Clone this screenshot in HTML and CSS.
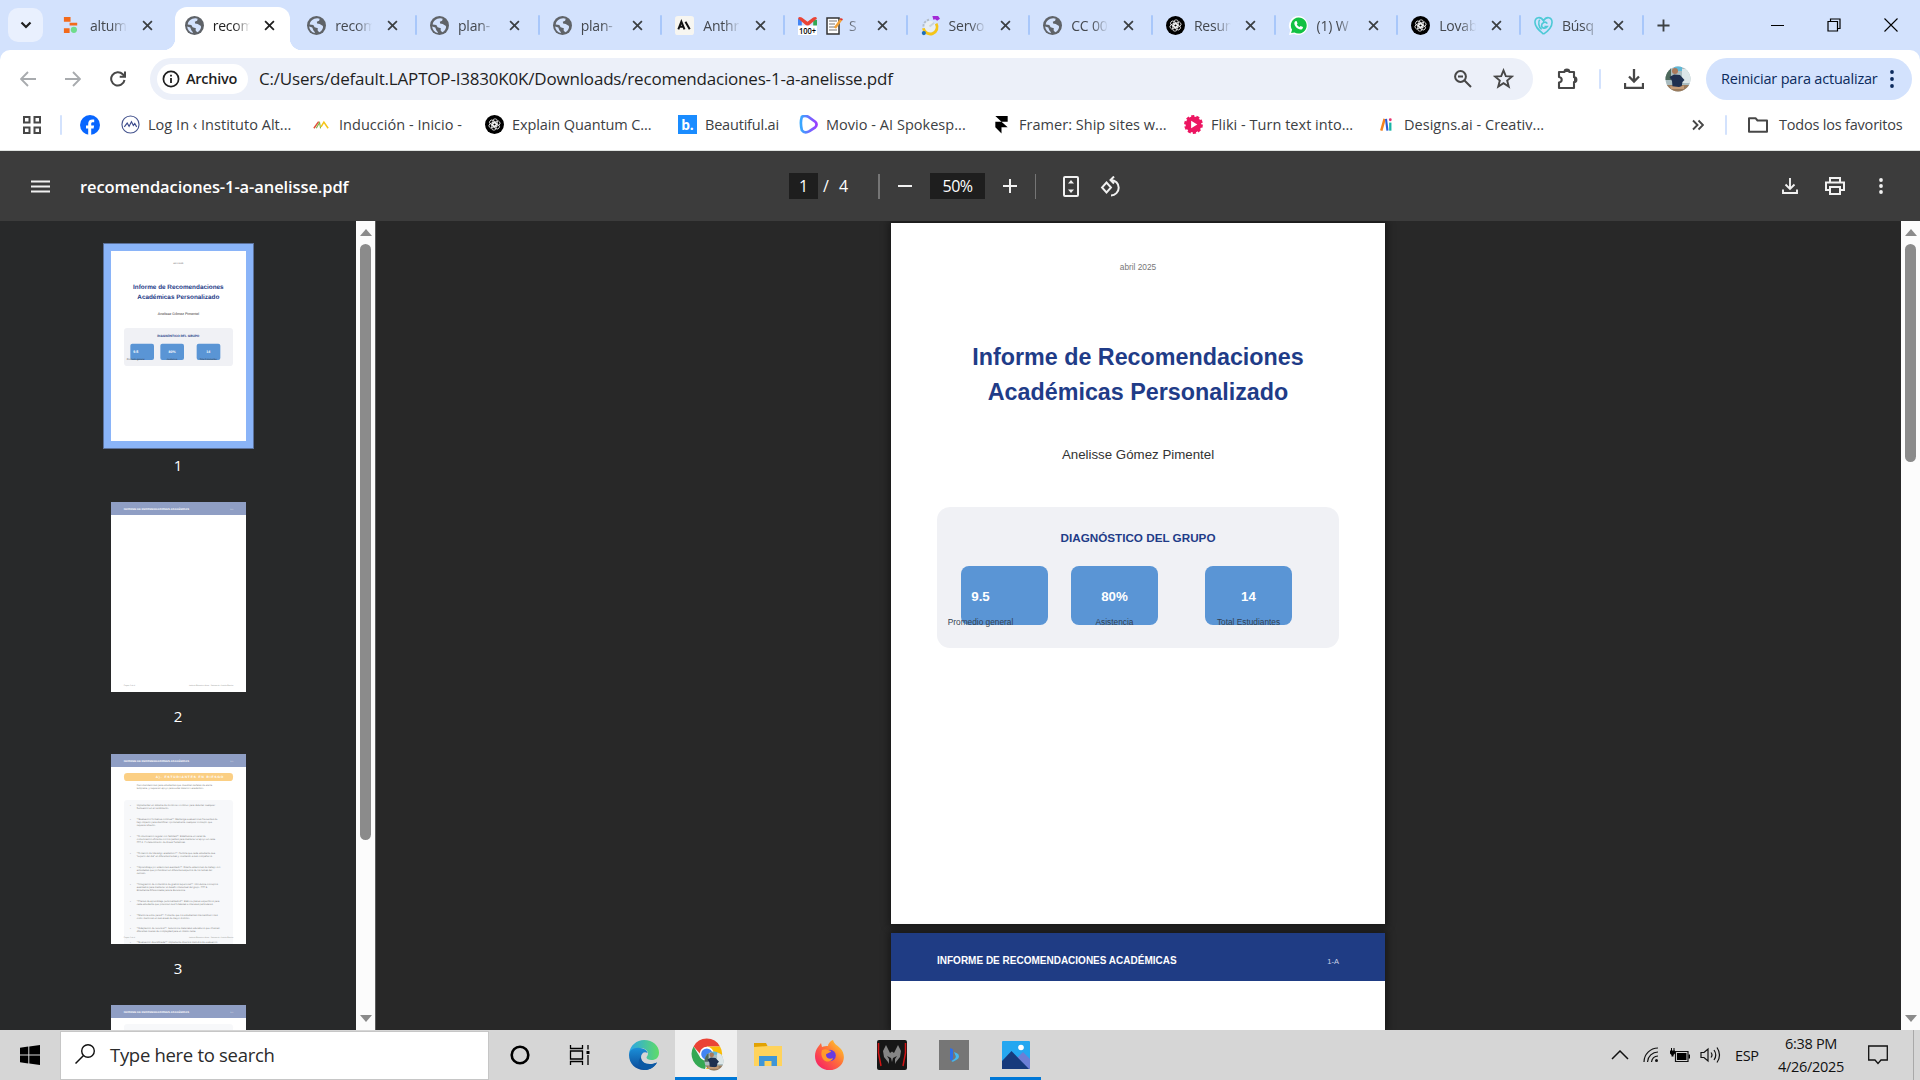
FILE: index.html
```html
<!DOCTYPE html>
<html lang="es">
<head>
<meta charset="utf-8">
<title>recomendaciones-1-a-anelisse.pdf</title>
<link rel="stylesheet" href="styles.css">
</head>
<body>
<svg class="defs" width="0" height="0">
  <symbol id="x" viewBox="0 0 12 12"><path d="M1.2 1.2 10.8 10.8M10.8 1.2 1.2 10.8" fill="none" stroke="currentColor" stroke-width="1.9"/></symbol>
  <symbol id="globe" viewBox="0 0 18 18"><circle cx="9" cy="9" r="9" fill="#5f6368"/><path d="M7 2.6C9 1.800 11 2 12 2.600L11.500 4.600 9.300 5.400 9.600 7.200 12 7.600 14.800 9.200C16 10.500 14.500 14 11.500 15.500L10 13.500 10.300 11.500 7.200 10.600 6 8.600 2.500 8C2.800 5.500 4.500 3.500 7 2.600Z" fill="#d3e2fd"/><path d="M2 10 5 11 6 13.500 7.500 15.500 7.200 16.200C4.500 15.500 2.300 13 2 10Z" fill="#d3e2fd"/></symbol>
  <symbol id="gpt" viewBox="0 0 20 20"><circle cx="10" cy="10" r="10" fill="#000"/><g fill="none" stroke="#fff" stroke-width=".8"><rect x="8.300" y="4" width="4.600" height="8" rx="2.300"/><rect x="8.300" y="4" width="4.600" height="8" rx="2.300" transform="rotate(60 10 10)"/><rect x="8.300" y="4" width="4.600" height="8" rx="2.300" transform="rotate(120 10 10)"/><rect x="8.300" y="4" width="4.600" height="8" rx="2.300" transform="rotate(180 10 10)"/><rect x="8.300" y="4" width="4.600" height="8" rx="2.300" transform="rotate(240 10 10)"/><rect x="8.300" y="4" width="4.600" height="8" rx="2.300" transform="rotate(300 10 10)"/></g></symbol>
  <symbol id="me" viewBox="0 0 26 26"><clipPath id="mc"><circle cx="13" cy="13" r="12.500"/></clipPath><g clip-path="url(#mc)"><path fill="#a9bcc0" d="M0 0h26v26H0z"/><path fill="#4e6a5c" d="M0 0h6v14H0z"/><path fill="#5fb8d8" d="M9 0h8v5H9z"/><path fill="#dce6e8" d="M17 3h9v14h-9z"/><path fill="#9a7b5c" d="M0 19h26v7H0z"/><path fill="#1f3050" d="M4.500 11 9 8.500l6 .5 4.500 5-2 2-1 5H7.500l-.5-6z"/><circle cx="10" cy="5" r="3" fill="#a97a5c"/><path fill="#c59c78" d="M5 20l9 1 5-1.500V23H6z"/></g></symbol>
</svg>

<header class="tabstrip">
  <div class="tabsearch"><svg width="12" height="8" viewBox="0 0 12 8"><path d="M1.500 1.500 6 6 10.500 1.500" fill="none" stroke="#1f1f1f" stroke-width="2.200"/></svg></div>
  <div class="tabs">
    <div class="tab"><svg class="fav" viewBox="0 0 20 20"><path fill="#f26a1b" d="M2 1h7v5H2zM8 7h8v3H8zM2 13h6v5H2z"/><circle cx="12.500" cy="14.500" r="3.300" fill="#6fdc8c"/></svg><span class="tt">altum</span><svg class="tx"><use href="#x"/></svg></div>
    <div class="tab active"><svg class="fav"><use href="#globe"/></svg><span class="tt">recom</span><svg class="tx"><use href="#x"/></svg></div>
    <div class="tab sep"><svg class="fav"><use href="#globe"/></svg><span class="tt">recom</span><svg class="tx"><use href="#x"/></svg></div>
    <div class="tab sep"><svg class="fav"><use href="#globe"/></svg><span class="tt">plan-</span><svg class="tx"><use href="#x"/></svg></div>
    <div class="tab sep"><svg class="fav"><use href="#globe"/></svg><span class="tt">plan-</span><svg class="tx"><use href="#x"/></svg></div>
    <div class="tab sep"><svg class="fav" viewBox="0 0 20 20"><rect width="20" height="20" rx="3" fill="#f7f6f1"/><path d="M3.500 14 6.700 6 10 14M4.700 11.300h4M11 6l4.500 8" fill="none" stroke="#111" stroke-width="2.100"/></svg><span class="tt">Anthr</span><svg class="tx"><use href="#x"/></svg></div>
    <div class="tab sep"><svg class="fav" viewBox="0 0 20 20"><path fill="#4285f4" d="M0 3h4v8H0z"/><path fill="#34a853" d="M16 4h4v7h-4z"/><path fill="#ea4335" d="M0 2.500Q1 0 4 1.500l6 4.500 6-4.500q3-1.500 4 1L10 11z"/><path fill="#fff" d="M0 10h20v10H0z"/><text x="1" y="18.500" font-size="9.500" font-weight="600" textLength="18" lengthAdjust="spacingAndGlyphs">100+</text></svg><span class="tt"><svg class="memo" viewBox="0 0 17 19"><path fill="#fff" stroke="#333" stroke-width="1.500" d="M1 2h12v16H1z"/><path stroke="#777" d="M3 5h8M3 8h6M3 11h6M3 14h8"/><path stroke="#f2a33a" stroke-width="2.600" d="M15.500 3 9 12"/><path stroke="#d33" stroke-width="2.600" d="M15.800 2.500 15 4"/></svg>S</span><svg class="tx"><use href="#x"/></svg></div>
    <div class="tab sep"><svg class="fav" viewBox="0 0 20 20"><circle cx="9.500" cy="11" r="6" fill="#e8eef4"/><path d="M16 8a7.300 7.300 0 1 1-13.500 5" fill="none" stroke="#f5c518" stroke-width="3"/><path d="M2.500 11a7 7 0 0 1 6-7" fill="none" stroke="#b4bec9" stroke-width="2" stroke-dasharray="2.500 1.200"/><circle cx="3" cy="18" r="2.200" fill="#1d6fb8"/><path d="M9 11 14 7" stroke="#c9d3dd" stroke-width="2"/><path fill="#a22bd6" d="M12 0h6l2 3-3 2-2-1.500-2 .5z"/></svg><span class="tt">Servo</span><svg class="tx"><use href="#x"/></svg></div>
    <div class="tab sep"><svg class="fav"><use href="#globe"/></svg><span class="tt">CC 00</span><svg class="tx"><use href="#x"/></svg></div>
    <div class="tab sep"><svg class="fav"><use href="#gpt"/></svg><span class="tt">Resun</span><svg class="tx"><use href="#x"/></svg></div>
    <div class="tab sep"><svg class="fav" viewBox="0 0 20 20"><path fill="#fff" d="M10 0a10 10 0 1 1-4.500 19L0 20l1.300-5A10 10 0 0 1 10 0z"/><path fill="#12c143" d="M10 1.500a8.500 8.500 0 1 1-4.200 15.800L2.200 18l1-3.500A8.500 8.500 0 0 1 10 1.500z"/><path fill="#fff" d="M6.500 5.500 8 5.200l1 2.600-.8 1.200c.7 1.300 1.600 2 2.900 2.600l1.100-1.100 2.500 1.100c.1 1.800-1.200 2.700-2.600 2.700C9 14 5.800 10.800 5.600 8c0-1 .3-1.900.9-2.500z"/></svg><span class="tt">(1) W</span><svg class="tx"><use href="#x"/></svg></div>
    <div class="tab sep"><svg class="fav"><use href="#gpt"/></svg><span class="tt">Lovab</span><svg class="tx"><use href="#x"/></svg></div>
    <div class="tab sep"><svg class="fav" viewBox="0 0 20 20"><path d="M10 19C4 14 1 11 1 6.500 1 1 7 0 10 5c3-5 9-4 9 1.500C19 11 16 15 10 19M14 8c-2-3-6-1-6 2s4 4 6 1h-3M6 4c-2 2-1 8 2 10" fill="none" stroke="#4dc9d6" stroke-width="1.700"/></svg><span class="tt">Búsq</span><svg class="tx"><use href="#x"/></svg></div>
  </div>
  <svg class="newtab" viewBox="0 0 14 14"><path d="M7 .5v13M.5 7h13" stroke="#3c4043" stroke-width="2"/></svg>
  <div class="winctl">
    <svg width="13" height="14"><path d="M0 7.500h13" stroke="#000"/></svg>
    <svg width="14" height="14" fill="none" stroke="#000" stroke-width="1.200"><path d="M1 3.500h9.500V13H1zM3.500 3V1H13v9.500h-2.500"/></svg>
    <svg width="14" height="14"><path d="M.5.5l13 13M13.500.5l-13 13" stroke="#000" stroke-width="1.100"/></svg>
  </div>
</header>

<nav class="toolbar">
  <svg class="nav n1" viewBox="0 0 16 16"><path d="M16 8H1.500M8 1 1 8l7 7" fill="none" stroke="#a8abae" stroke-width="1.900"/></svg>
  <svg class="nav n2" viewBox="0 0 16 16"><path d="M0 8h14.500M8 1l7 7-7 7" fill="none" stroke="#a8abae" stroke-width="1.900"/></svg>
  <svg class="nav n3" viewBox="0 0 16 16"><path d="M14.500 9A6.700 6.700 0 1 1 12.800 3.300L15 5.500M15 .5v5.300H9.700" fill="none" stroke="#474747" stroke-width="2"/></svg>
  <div class="omnibox">
    <div class="chip"><svg width="18" height="18" viewBox="0 0 18 18"><circle cx="9" cy="9" r="7.600" fill="none" stroke="#1f1f1f" stroke-width="1.700"/><path d="M9 8v5M9 4.800v1.800" stroke="#1f1f1f" stroke-width="1.800"/></svg><span class="arch">Archivo</span></div>
    <span class="url">C:/Users/default.LAPTOP-I3830K0K/Downloads/recomendaciones-1-a-anelisse.pdf</span>
    <svg class="zoomi" viewBox="0 0 18 18"><g fill="none" stroke="#474747" stroke-width="2"><circle cx="6.500" cy="6.500" r="5.400"/><path d="M10.500 10.500 17 17M4 6.500h5"/></g></svg>
    <svg class="star" viewBox="0 0 20 20"><path d="M10 2.300 12.200 7.800 18 8.200 13.500 12 15 17.700 10 14.500 5 17.700 6.500 12 2 8.200 7.800 7.800Z" fill="none" stroke="#474747" stroke-width="1.800"/></svg>
  </div>
  <svg class="puzzle" viewBox="0 0 21 22"><path d="M2 4h5.500a2.400 2.400 0 0 1 4.800 0H17v5.300a2.400 2.400 0 0 1 0 4.800V20H2v-5.500c3.600-.5 3.600-5 0-5.500z" fill="none" stroke="#474747" stroke-width="2.100" stroke-linejoin="round"/><path fill="#474747" d="M7.500 4a2.400 2.400 0 0 1 4.800 0zM17 9.300a2.400 2.400 0 0 1 0 4.800z"/></svg>
  <i class="vbar"></i>
  <svg class="dl" viewBox="0 0 20 20"><path d="M10 0v12M5 7.500l5 5 5-5M1 14v5h18v-5" fill="none" stroke="#474747" stroke-width="2.300"/></svg>
  <svg class="avatar"><use href="#me"/></svg>
  <div class="update"><span>Reiniciar para actualizar</span><svg width="4" height="18" fill="#0b2a5c"><circle cx="2" cy="2" r="1.900"/><circle cx="2" cy="9" r="1.900"/><circle cx="2" cy="16" r="1.900"/></svg></div>
</nav>

<nav class="bookmarks">
  <svg class="apps" viewBox="0 0 18 18"><path d="M1 1h5.500v5.500H1zM11.500 1H17v5.500h-5.500zM1 11.500h5.500V17H1zM11.500 11.500H17V17h-5.500z" fill="none" stroke="#474747" stroke-width="2"/></svg>
  <i class="vbar"></i>
  <svg class="fb" viewBox="0 0 20 20"><circle cx="10" cy="10" r="10" fill="#0866ff"/><path fill="#fff" d="M8.200 20v-6.500H6v-3h2.200V9c0-3.200 1.500-4.600 4.400-4.600.6 0 1.200.1 1.600.2v2.700h-1.400c-1.300 0-1.600.6-1.600 1.700v1.500h2.900l-.5 3h-2.400V20z"/></svg>
  <div class="bm b1"><svg viewBox="0 0 20 20"><circle cx="10" cy="10" r="9" fill="#fff" stroke="#46558f" stroke-width="1.200"/><path d="M3.500 12.500 6.500 8.500 8.500 12 11 7 13 11l1.500-2L16.500 12.500" fill="none" stroke="#3b4a8c" stroke-width="1.200"/></svg><span>Log In ‹ Instituto Alt...</span></div>
  <div class="bm b2"><svg viewBox="0 0 20 20"><path d="M2 14 7 7" stroke="#e0503a" stroke-width="1.600"/><path d="M4.500 14 8 8 9 14" fill="none" stroke="#7cb342" stroke-width="1.100"/><path d="M9.500 12.500l3-5 4.500 6.500" fill="none" stroke="#f5c518" stroke-width="1.600"/></svg><span>Inducción - Inicio -</span></div>
  <div class="bm b3"><svg><use href="#gpt"/></svg><span>Explain Quantum C...</span></div>
  <div class="bm b4"><svg viewBox="0 0 20 20"><path fill="#1a8cff" d="M0 0h20v20H0z"/><text x="3.500" y="15.500" fill="#fff" font-size="14.500" font-weight="700">b.</text></svg><span>Beautiful.ai</span></div>
  <div class="bm b5"><svg viewBox="0 0 20 20"><defs><linearGradient id="mv"><stop stop-color="#37a8ff"/><stop offset="1" stop-color="#9a3cff"/></linearGradient></defs><path d="M3 2Q6 0 10 2l7 5q3 3 0 6l-6 4q-5 3-8-1Q1 8 3 2Z" fill="none" stroke="url(#mv)" stroke-width="2.800"/></svg><span>Movio - AI Spokesp...</span></div>
  <div class="bm b6"><svg viewBox="0 0 20 20"><path d="M3.500 1h13v6H10l6.500 6H10v6.500L3.500 13V7H10z" fill="#000"/></svg><span>Framer: Ship sites w...</span></div>
  <div class="bm b7"><svg viewBox="0 0 20 20"><circle cx="10" cy="10" r="8.400" fill="#ec1561" stroke="#ec1561" stroke-width="3" stroke-dasharray="3.200 2.080"/><path fill="#fff" d="M7.500 6 14 10l-6.500 4z"/></svg><span>Fliki - Turn text into...</span></div>
  <div class="bm b8"><svg viewBox="0 0 20 20"><path d="M4.500 16.500 8 4" stroke="#f58220" stroke-width="2.600"/><path d="M9.500 4l1.500 12.500" stroke="#2a5bd7" stroke-width="2.200"/><path d="M14 8v8.500" stroke="#17b5a6" stroke-width="2.400"/><circle cx="14" cy="5" r="1.500" fill="#e8336d"/></svg><span>Designs.ai - Creativ...</span></div>
  <svg class="more" viewBox="0 0 12 12"><path d="M1 1.500 5.500 6 1 10.500M6.500 1.500 11 6l-4.500 4.500" fill="none" stroke="#474747" stroke-width="1.900"/></svg>
  <i class="vbar"></i>
  <svg class="folder" viewBox="0 0 20 16"><path d="M1 14.800V1.200h6.500l2 2.300H19v11.300z" fill="none" stroke="#474747" stroke-width="2" stroke-linejoin="round"/></svg>
  <span class="all">Todos los favoritos</span>
</nav>

<section class="pdfbar">
  <svg class="menu" viewBox="0 0 19 13"><path d="M0 1.500h19M0 6.500h19M0 11.500h19" stroke="#f1f1f1" stroke-width="2"/></svg>
  <h1>recomendaciones-1-a-anelisse.pdf</h1>
  <div class="pages"><b>1</b><span>/</span><span>4</span></div>
  <i class="pbar"></i>
  <svg class="pm" viewBox="0 0 14 14"><path d="M0 7h14" stroke="#f1f1f1" stroke-width="2"/></svg>
  <b class="pct">50%</b>
  <svg class="pm" viewBox="0 0 14 14"><path d="M0 7h14M7 0v14" stroke="#f1f1f1" stroke-width="2"/></svg>
  <i class="pbar p2"></i>
  <svg class="fitp" viewBox="0 0 16 21"><rect x="1" y="1" width="14" height="19" rx="1" fill="none" stroke="#f1f1f1" stroke-width="2"/><path fill="#f1f1f1" d="M8 4l3 3.500H5zM8 17l3-3.500H5z"/></svg>
  <svg class="rot" viewBox="0 0 22 21"><path d="M6.500 6.500 11 11.500 6.500 16.500 2 11.500Z" fill="none" stroke="#f1f1f1" stroke-width="1.900"/><path d="M11 4a7.700 7.700 0 1 1 0 15.400M14 .5 10.500 4 14 7.500" fill="none" stroke="#f1f1f1" stroke-width="2"/></svg>
  <div class="right">
    <svg width="16" height="16" viewBox="0 0 16 16"><path d="M8 0v10.500M3.500 6.500 8 11l4.500-4.500M1 11.500V15h14v-3.500" fill="none" stroke="#f1f1f1" stroke-width="1.900"/></svg>
    <svg width="20" height="18" viewBox="0 0 20 18"><path d="M5 5V1h10v4M4.500 13H1V5.500h18V13h-3.500M5 10h10v7H5z" fill="none" stroke="#f1f1f1" stroke-width="2"/></svg>
    <svg width="4" height="16" fill="#f1f1f1"><circle cx="2" cy="2" r="1.900"/><circle cx="2" cy="8" r="1.900"/><circle cx="2" cy="14" r="1.900"/></svg>
  </div>
</section>

<main class="viewer">
  <aside class="side">
    <div class="thumb sel"><svg viewBox="0 0 405 570">
      <path fill="#fff" d="M0 0h405v570H0z"/>
      <text x="202" y="38.500" font-size="6.800" text-anchor="middle" fill="#666">abril 2025</text>
      <g font-weight="700" fill="#1f3c88" text-anchor="middle"><text x="202" y="114" font-size="19.100">Informe de Recomendaciones</text><text x="202" y="144" font-size="19.100">Académicas Personalizado</text></g>
      <text x="202" y="192" font-size="10.800" text-anchor="middle" fill="#333">Anelisse Gómez Pimentel</text>
      <rect x="39" y="231" width="327" height="114" rx="10" fill="#f0f1f5"/>
      <text x="202" y="257" font-size="9.500" font-weight="700" text-anchor="middle" fill="#1f3c88">DIAGNÓSTICO DEL GRUPO</text>
      <g fill="#5a95d5"><rect x="58" y="278" width="71" height="49" rx="6"/><rect x="148" y="278" width="71" height="49" rx="6"/><rect x="257" y="278" width="71" height="49" rx="6"/></g>
      <g fill="#fff" font-weight="700" font-size="10.800" text-anchor="middle"><text x="74" y="306">9.5</text><text x="183" y="306">80%</text><text x="292" y="306">14</text></g>
      <g fill="#333" font-size="6.800" text-anchor="middle"><text x="74" y="327">Promedio general</text><text x="183" y="327">Asistencia</text><text x="292" y="327">Total Estudiantes</text></g>
    </svg></div>
    <span class="num first">1</span>
    <div class="thumb"><svg viewBox="0 0 405 570">
      <path fill="#8f9ec4" d="M0 0h405v39H0z"/><text x="38" y="24" font-size="8.200" font-weight="700" fill="#fff">INFORME DE RECOMENDACIONES ACADÉMICAS</text><text x="367" y="24" font-size="6" text-anchor="end" fill="#e6e9f3">1-A</text>
      <g font-size="5.500" fill="#999"><text x="38" y="552">Página 2 de 4</text><text x="367" y="552" text-anchor="end">Instituto Educativo Altum - Sistema de Gestión Escolar</text></g>
    </svg></div>
    <span class="num">2</span>
    <div class="thumb"><svg viewBox="0 0 405 570">
      <path fill="#8f9ec4" d="M0 0h405v39H0z"/><text x="38" y="24" font-size="8.200" font-weight="700" fill="#fff">INFORME DE RECOMENDACIONES ACADÉMICAS</text><text x="367" y="24" font-size="6" text-anchor="end" fill="#e6e9f3">1-A</text>
      <rect x="39" y="57" width="327" height="24" rx="10" fill="#fbcf84"/><text x="134" y="72.500" font-size="9.500" font-weight="700" fill="#fff" textLength="203">A). ESTUDIANTES EN RIESGO</text>
      <path fill="#f7f8fa" d="M39 570V148q0-10 10-10h307q10 0 10 10v422z"/>
      <g font-size="7.200" fill="#7c7c7c">
        <text x="77" y="95" textLength="226">Recomendaciones para estudiantes que muestran señales de alerta</text><text x="77" y="104" textLength="202">temprana, y requieren apoyo para evitar deterioro académico.</text>
        <text x="57" y="156">•</text><text x="77" y="156" textLength="235">Implementar un sistema de monitoreo continuo para detectar cualquier</text><text x="77" y="165" textLength="97">fluctuación en el rendimiento.</text>
        <text x="57" y="198">•</text><text x="77" y="198" textLength="242">**Evaluación formativa continua**: Mantenga evaluaciones frecuentes de</text><text x="77" y="207" textLength="226">bajo impacto para identificar oportunamente cualquier concepto que</text><text x="77" y="216" textLength="57">requiera refuerzo.</text>
        <text x="57" y="249">•</text><text x="77" y="249" textLength="207">**Comunicación regular con familias**: Establezca un canal de</text><text x="77" y="258" textLength="235">comunicación eficiente con los padres para mantener el apoyo en casa</text><text x="77" y="267" textLength="145">### 4. Fortalecimiento de Áreas Temáticas</text>
        <text x="57" y="300">•</text><text x="77" y="300" textLength="235">**Rotación de liderazgo académico**: Permita que cada estudiante sea</text><text x="77" y="309" textLength="228">"experto del día" en diferentes temas y orientando a sus compañeros.</text>
        <text x="57" y="342">•</text><text x="77" y="342" textLength="251">**Aprendizaje por estaciones avanzado**: Diseñe estaciones de trabajo con</text><text x="77" y="351" textLength="226">actividades que profundicen en diferentes aspectos de los temas del</text><text x="77" y="360" textLength="28">currículo.</text>
        <text x="57" y="393">•</text><text x="77" y="393" textLength="244">**Integración de contenidos de grados superiores**: Introduzca conceptos</text><text x="77" y="402" textLength="213">avanzados para mantener el desafío intelectual del grupo. ### 5.</text><text x="77" y="411" textLength="145">Enseñanza Diferenciada para la Excelencia</text>
        <text x="57" y="444">•</text><text x="77" y="444" textLength="248">**Planes de aprendizaje personalizados**: Elabore planes específicos para</text><text x="77" y="453" textLength="230">cada estudiante que potencien sus fortalezas e intereses particulares.</text>
        <text x="57" y="486">•</text><text x="77" y="486" textLength="243">**Mentoría entre pares**: Fomente que los estudiantes intercambien roles</text><text x="77" y="495" textLength="160">como mentores en sus áreas de mayor dominio.</text>
        <text x="57" y="525">•</text><text x="77" y="525" textLength="249">**Adaptación de recursos**: Seleccione materiales educativos que ofrezcan</text><text x="77" y="534" textLength="178">diferentes niveles de complejidad para un mismo tema.</text>
        <text x="57" y="567">•</text><text x="77" y="567" textLength="242">**Evaluación diversificada**: Implemente diversos métodos de evaluación</text>
      </g>
      <g font-size="5.500" fill="#999"><text x="38" y="552">Página 3 de 4</text><text x="367" y="552" text-anchor="end">Instituto Educativo Altum - Sistema de Gestión Escolar</text></g>
    </svg></div>
    <span class="num third">3</span>
    <div class="thumb last"><svg viewBox="0 0 405 75">
      <path fill="#8f9ec4" d="M0 0h405v39H0z"/><text x="38" y="24" font-size="8.200" font-weight="700" fill="#fff">INFORME DE RECOMENDACIONES ACADÉMICAS</text><text x="367" y="24" font-size="6" text-anchor="end" fill="#e6e9f3">1-A</text>
      <path fill="#f7f8fa" d="M39 75V67q0-10 10-10h307q10 0 10 10v8z"/>
    </svg></div>
  </aside>
  <div class="scroll"><i class="up"></i><i class="grip g1"></i><i class="down"></i></div>
  <div class="doc">
    <article class="page">
      <p class="date">abril 2025</p>
      <h2>Informe de Recomendaciones<br>Académicas Personalizado</h2>
      <p class="who">Anelisse Gómez Pimentel</p>
      <section class="card">
        <h3>DIAGNÓSTICO DEL GRUPO</h3>
        <div class="stats">
          <div class="stat s1"><b>9.5</b><span>Promedio general</span></div>
          <div class="stat s2"><b>80%</b><span>Asistencia</span></div>
          <div class="stat s3"><b>14</b><span>Total Estudiantes</span></div>
        </div>
      </section>
    </article>
    <article class="page next">
      <header><b>INFORME DE RECOMENDACIONES ACADÉMICAS</b><span>1-A</span></header>
    </article>
  </div>
  <div class="scroll plain"><i class="up"></i><i class="grip g2"></i><i class="down"></i></div>
</main>

<footer class="taskbar">
  <svg class="start" viewBox="0 0 20 20"><path d="M0 2.800 8.300 1.600v7.900H0zM9.300 1.400 20 0v9.500H9.300zM0 10.500h8.300v7.900L0 17.200zM9.300 10.500H20V20L9.300 18.600z"/></svg>
  <div class="search"><svg viewBox="0 0 20 20"><circle cx="13" cy="7" r="6.300" fill="none" stroke="#111" stroke-width="1.400"/><path d="M8.500 11.500.5 19.500" stroke="#111" stroke-width="1.500"/></svg><span>Type here to search</span></div>
  <div class="cell"><svg width="20" height="20"><circle cx="10" cy="10" r="8.300" fill="none" stroke="#000" stroke-width="2.600"/></svg></div>
  <div class="cell view"><svg width="21" height="20" fill="none" stroke="#000" stroke-width="1.300"><path d="M1.500 0v3.500h12V0M1.500 6h12v8h-12zM1.500 20v-3.500h12V20M19 0v4.500M19 10v10"/><path d="M17.500 6h3v3h-3z" fill="#000" stroke="none"/></svg></div>
  <div class="cell"><svg width="30" height="30" viewBox="0 0 30 30"><defs><linearGradient id="e1"><stop stop-color="#2aa4e8"/><stop offset="1" stop-color="#5fdc68"/></linearGradient><linearGradient id="e2" x2="0" y2="1"><stop stop-color="#1b8fd8"/><stop offset="1" stop-color="#0b4a98"/></linearGradient></defs><path fill="url(#e1)" d="M0 14C1 5 8 0 15 0c9 0 15 6 15 12.500 0 5-3 7.500-7.500 7.500-3 0-5-1-5-2.500 0-1 1.500-1.500 1.500-4C19 10 15 8 11 8 5 8 1 11 0 14z"/><path fill="url(#e2)" d="M0 15c0-5 5-8 11-7 5 .5 7.500 3 7.500 5-3-2-6.500 0-6.500 4.500 0 6 7 9 16 5C25 28 20 30 15 30 6.500 30 0 23.500 0 15z"/><path fill="#0c59a4" d="M12 17c0 6 7 9 16 5.500C24 29 19 30 16 30 9 29 8 20 12 17z"/></svg></div>
  <div class="cell on"><svg width="34" height="34" viewBox="0 0 34 34"><path fill="#ea4335" d="M2.600 8.500A15 15 0 0 1 29 8.500H16v15z"/><path fill="#34a853" d="M2.600 8.500 9.500 20l6.500 3.500L14 31A15 15 0 0 1 2.600 8.500z"/><path fill="#fbbc04" d="M16 8.500h13A15 15 0 0 1 15 31l7.500-11z"/><circle cx="15.800" cy="16" r="7.200" fill="#fff"/><circle cx="15.800" cy="16" r="5.600" fill="#4285f4"/><svg x="13" y="13" width="20" height="20"><use href="#me"/></svg></svg></div>
  <div class="cell"><svg width="28" height="26" viewBox="0 0 28 26"><path fill="#e2a203" d="M0 1h12l2 4H0z"/><path fill="#ffd35c" d="M0 5 14 4h14v20H0z"/><path fill="#3f96d8" d="M5 24V14h18v10h-5.500v-5h-7v5z"/></svg></div>
  <div class="cell"><svg width="30" height="30" viewBox="0 0 30 30"><defs><linearGradient id="ff" x1="1" y1="0" x2="0" y2="1"><stop stop-color="#ffe226"/><stop offset=".45" stop-color="#ff7139"/><stop offset="1" stop-color="#f5106d"/></linearGradient></defs><path fill="url(#ff)" d="M3 7 6 3l1 4c2-1 4-1 6-1 0-2 2-5 5-6 1 4 4 5 7 8 5 5 5 12 1 17-6 7-17 7-23 0C-1 20-1 12 3 7z"/><circle cx="15" cy="15.500" r="5.800" fill="#6a3be0"/><path fill="#ff9b2b" d="M7 10c4-2 6 0 9 1 0 2-5 2-5 4 0 3 4 5 7 3-1 4-7 5-10 1-2-3-2-6-1-9z"/></svg></div>
  <div class="cell"><svg width="30" height="30" viewBox="0 0 30 30"><rect width="30" height="30" rx="2" fill="#161616"/><path stroke="#d11414" stroke-width="1.500" d="M1.500 3v10L4 26M28.500 3v10L26 26" fill="none"/><path fill="#858585" d="M9 5l4 8 2-1.500 2 1.500 4-8 3 6-1 6-4 5-1 2v-5l2-3-4 2-1 4-1-4-4-2 2 3v5l-1-2-4-5-1-6z"/></svg></div>
  <div class="cell"><svg width="30" height="30" viewBox="0 0 30 30"><path fill="#767676" d="M0 0h30v30H0z"/><path fill="#2f6fe8" d="M11 8l3 1.300V18l-1 3-2-1.500z"/><path fill="#46b8ee" d="M15 12l3 1.300q2 1 2 3.200 0 2-2 3l-3.500 2q-1.500.5-2-.5l3.500-2.500q1.500-1.500.5-3z"/></svg></div>
  <div class="cell photos"><svg width="28" height="28" viewBox="0 0 28 28"><rect width="28" height="28" rx="1" fill="#25a7f0"/><path fill="#6d7fd6" d="M14 18l7-7 7 7v10H14z"/><path fill="#173a7c" d="M0 20 9.500 10 27 28H0z"/><circle cx="19" cy="6.500" r="2.800" fill="#fff"/></svg></div>
  <div class="tray">
    <svg class="t1" width="18" height="10"><path d="M1 9 9 1l8 8" fill="none" stroke="#111" stroke-width="1.500"/></svg>
    <svg class="t2" width="16" height="16" fill="none" stroke="#111" stroke-width="1.200"><path d="M1 15A14 14 0 0 1 15 1M4.500 15A10.500 10.500 0 0 1 15 5M8.500 15A7 7 0 0 1 15 9"/><circle cx="13.500" cy="13.500" r="1.500" fill="#111" stroke="none"/></svg>
    <svg class="t3" width="21" height="15"><path d="M5.500 3.500H18v10H5.500z" fill="none" stroke="#111" stroke-width="1.200"/><path d="M7 5h9.500v7H7zM18.500 6.500H20v4h-1.500zM0 2.500h5v3L3.500 7v1.500h-2V7L0 5.500zM1 0h1v3H1zM3.500 0h1v3h-1z"/></svg>
    <svg class="t4" width="21" height="18" fill="none" stroke="#111" stroke-width="1.200"><path d="M1 6.500h3L8 3v12l-4-3.500H1zM11 6.500q2 2.500 0 5M14 4q3.500 5 0 10M17 1.500q5 7.500 0 15"/></svg>
    <span class="esp">ESP</span>
    <div class="clock"><span>6:38 PM</span><span>4/26/2025</span></div>
    <svg class="t5" width="20" height="20"><path d="M.7 1h18.600v14h-6.300L10 18.500 7 15H.7z" fill="none" stroke="#111" stroke-width="1.300"/></svg>
    <i></i>
  </div>
</footer>
</body>
</html>
```
FILE: styles.css
```css
* { box-sizing: border-box; margin: 0; padding: 0; }
body { width: 1920px; height: 1080px; overflow: hidden; display: flex; flex-direction: column; background: #d3e2fd; font-family: "Open Sans", "Noto Sans", sans-serif; font-stretch: 92%; color: #1f1f1f; }
svg { display: block; flex: none; }
i { display: block; flex: none; }
span, b, h1 { white-space: nowrap; }
.defs { position: absolute; }

.tabstrip { display: flex; height: 50px; flex: none; align-items: center; }
.tabsearch { width: 35px; height: 34px; margin-left: 8px; border-radius: 10px; background: #e9f0fe; display: flex; align-items: center; justify-content: center; }
.tabs { display: flex; margin-left: 6px; height: 50px; }
.tab { width: 122.67px; height: 50px; padding-left: 13px; display: flex; align-items: center; position: relative; }
.tab .fav { width: 19px; height: 19px; overflow: visible; }
.tt { width: 38px; margin-left: 9px; font-size: 14px; letter-spacing: -.2px; color: #44484e; display: flex; gap: 6px; -webkit-mask-image: linear-gradient(90deg, #000 55%, transparent 98%); mask-image: linear-gradient(90deg, #000 55%, transparent 98%); }
.memo { width: 17px; height: 19px; }
.tx { width: 11px; height: 11px; margin-left: 13.5px; color: #3c4043; }
.sep::after { content: ""; position: absolute; right: 0; top: 15px; width: 2px; height: 20px; background: #a8c7fa; border-radius: 1px; }
.active::before { content: ""; position: absolute; z-index: -1; left: 3px; right: 4px; top: 7px; bottom: 0; background: #fff; border-radius: 12px 12px 0 0; }
.active::after { content: ""; position: absolute; z-index: -1; left: -9px; right: -8px; bottom: 0; height: 12px; background: radial-gradient(circle at 0 0, transparent 12px, #fff 12.5px) left / 12px 12px no-repeat, radial-gradient(circle at 100% 0, transparent 12px, #fff 12.5px) right / 12px 12px no-repeat; }
.active .tt, .active .tx { color: #1f1f1f; }
.newtab { width: 13px; height: 13px; margin-left: 13px; }
.winctl { margin-left: auto; margin-right: 22px; display: flex; gap: 43px; }

.toolbar { height: 51px; padding-bottom: 1px; padding-top: 7px; flex: none; display: flex; align-items: center; background: #fff; border-radius: 10px 10px 0 0; }
.nav { width: 16px; height: 16px; }
.n1 { margin-left: 20px; } .n2 { margin-left: 29px; } .n3 { margin-left: 29px; }
.omnibox { width: 1383px; height: 42px; margin-left: 24px; border-radius: 21px; background: #ecf0f9; display: flex; align-items: center; padding-left: 7px; }
.chip { width: 91px; height: 30px; border-radius: 15px; background: #fff; display: flex; align-items: center; padding-left: 5px; gap: 6px; }
.arch { font-size: 14.5px; font-weight: 600; letter-spacing: -.25px; }
.url { margin-left: 11px; width: 640px; font-size: 17px; letter-spacing: -.19px; }
.zoomi { width: 18px; height: 18px; margin-left: 555px; }
.star { width: 21px; height: 21px; margin-left: 21px; }
.puzzle { width: 21px; height: 22px; margin-left: 24px; }
.vbar { width: 2px; height: 20px; background: #d3e2fd; border-radius: 1px; }
.toolbar .vbar { margin-left: 21px; }
.dl { width: 20px; height: 20px; margin-left: 23px; }
.avatar { width: 26px; height: 26px; margin-left: 21px; }
.update { width: 206px; height: 42px; margin-left: 15px; border-radius: 21px; background: #d3e2fd; display: flex; align-items: center; padding-left: 15px; color: #0b2a5c; font-size: 14.5px; letter-spacing: -.2px; }
.update span { width: 169px; }

.bookmarks { height: 49px; padding-bottom: 2px; flex: none; background: #fff; display: flex; align-items: center; font-size: 14.5px; letter-spacing: -.2px; color: #3c4043; }
.apps { width: 18px; height: 18px; margin-left: 23px; }
.bookmarks .vbar { margin-left: 19px; }
.fb { width: 20px; height: 20px; margin: 0 21px 0 18px; }
.bm { display: flex; align-items: center; gap: 8px; }
.bm svg { width: 19px; height: 19px; }
.b1, .b2, .b5, .b6, .b7, .b8 { letter-spacing: .03px; }
.b3 { letter-spacing: -.1px; }
.b1 { width: 191px; } .b2 { width: 173px; } .b3 { width: 193px; } .b4 { width: 121px; }
.b5 { width: 193px; } .b6 { width: 192px; } .b7 { width: 193px; } .b8 { width: 315px; }
.more { width: 12px; height: 12px; }
.bookmarks .more + .vbar { margin-left: 21px; }
.folder { width: 20px; height: 16px; margin: 0 11px 0 21px; }

.pdfbar { height: 71px; flex: none; background: #3c3c3c; border-top: 1px solid #dfe3e1; display: flex; align-items: center; color: #fff; }
.menu { width: 19px; height: 13px; margin-left: 31px; }
h1 { width: 709px; margin-left: 30px; font-size: 16.5px; font-weight: 600; letter-spacing: -.1px; }
.pages { display: flex; align-items: center; width: 89px; font-size: 16px; }
.pages b, .pct { background: #1e1e1e; height: 26px; display: flex; align-items: center; justify-content: center; font-weight: 400; font-size: 16px; }
.pages b { width: 29px; margin-right: 5px; }
.pages span { margin-right: 10px; }
.pbar { width: 2px; height: 25px; background: #757575; }
.pm { width: 14px; height: 14px; margin: 0 18px; }
.pct { width: 55px; letter-spacing: -.5px; }
.p2 { width: 1px; }
.fitp { width: 16px; height: 21px; margin-left: 27px; }
.rot { width: 22px; height: 21px; margin-left: 21px; }
.right { margin-left: auto; margin-right: 37px; display: flex; align-items: center; gap: 27px; }
.right svg:last-child { margin-left: 7px; }

.viewer { height: 809px; flex: none; display: flex; background: #282828; overflow: hidden; }
.side { width: 356px; height: 809px; background: #28292a; display: flex; flex-direction: column; align-items: center; }
.thumb { width: 135px; height: 190px; flex: none; background: #fff; }
.thumb svg { width: 135px; height: 190px; }
.side svg, .page { font-family: "Liberation Sans", Arial, sans-serif; font-stretch: normal; }
.side svg { text-rendering: geometricPrecision; }
.thumb.sel { margin-top: 22px; width: 151px; height: 206px; background: #8ab4f8; border: 1px solid #5b719b; padding: 7px; }
.num { height: 62px; line-height: 48px; flex: none; color: #fff; font-size: 15px; }
.first { height: 53px; line-height: 32px; }
.third { height: 61px; }
.thumb.last, .thumb.last svg { height: 25px; }
.scroll { width: 20px; height: 809px; flex: none; background: #fcfcfc; border-right: 1px solid #5b5b5b; display: flex; flex-direction: column; align-items: center; padding: 8px 0; }
.plain { width: 19px; border: 0; margin-left: auto; }
.up { border: 6.5px solid transparent; border-top: 0; border-bottom: 7px solid #8b8b8b; }
.down { border: 6.5px solid transparent; border-bottom: 0; border-top: 7px solid #8b8b8b; margin-top: auto; }
.grip { width: 11px; border-radius: 6px; background: #8b8b8b; margin-top: 8px; }
.g1 { height: 596px; } .g2 { height: 218px; }

.doc { width: 494px; height: 809px; margin-left: 515px; padding-top: 2px; display: flex; flex-direction: column; gap: 9px; }
.page { width: 494px; height: 701px; flex: none; background: #fff; box-shadow: 0 0 8px 2px rgba(0,0,0,.45); text-align: center; }
.date { padding-top: 39px; height: 55px; line-height: 11px; font-size: 8.3px; color: #777; }
h2 { margin-top: 62px; font-size: 23.3px; line-height: 35px; color: #1f3c88; }
.who { margin-top: 37px; line-height: 16px; font-size: 13.3px; color: #333; }
.card { margin: 44px 46px 0; height: 141px; border-radius: 13px; background: #f0f1f5; padding-top: 24px; }
h3 { font-size: 11.7px; line-height: 14px; color: #1f3c88; }
.stats { display: flex; margin-top: 21px; padding-left: 24px; }
.stat { width: 87px; height: 59px; border-radius: 8px; background: #5a95d5; display: flex; flex-direction: column; align-items: center; padding-top: 23px; font-size: 8.3px; color: #333f50; }
.stat b { font-size: 13.3px; line-height: 15px; color: #fff; margin-bottom: 13px; }
.stat span { line-height: 10px; }
.s1 { padding-right: 48px; }
.s2 { margin-left: 23px; }
.s3 { margin-left: 47px; }
.page.next { height: 97px; }
.next header { height: 48px; background: #1f3c84; display: flex; justify-content: space-between; align-items: center; padding: 6px 46px 0; color: #fff; font-size: 10px; }
.next header span { font-size: 7.5px; color: #c9d1e6; margin-top: 2px; }

.taskbar { height: 50px; flex: none; background: #d6d6d6; display: flex; align-items: center; }
.start { width: 20px; height: 20px; margin-left: 20px; }
.search { width: 429px; height: 49px; margin-left: 20px; background: #fff; border: 1px solid #c6c6c6; display: flex; align-items: center; padding: 0 0 2px 14px; gap: 15px; font-size: 18.5px; letter-spacing: -.3px; color: #2b2b2b; }
.search svg { width: 20px; height: 20px; }
.cell { width: 62px; height: 50px; display: flex; align-items: center; justify-content: center; }
.cell.view { padding-right: 5px; }
.on { background: #efefef; border-bottom: 3px solid #0078d7; padding: 3px 0 0 3px; }
.cell.photos { width: 51px; margin-left: 5px; border-bottom: 3px solid #0078d7; padding-top: 3px; }
.tray { margin-left: auto; height: 50px; display: flex; align-items: center; width: 309px; font-size: 14.5px; color: #111; letter-spacing: -.3px; }
.t2 { margin-left: 14px; } .t3 { margin-left: 11px; } .t4 { margin-left: 9px; }
.esp { width: 24px; margin-left: 14px; letter-spacing: -.4px; }
.clock { width: 84px; margin-left: 10px; display: flex; flex-direction: column; align-items: center; line-height: 23px; }
.t5 { margin-left: 15px; }
.tray i { width: 1px; height: 50px; margin-left: 25px; background: #a9a9a9; }
```
